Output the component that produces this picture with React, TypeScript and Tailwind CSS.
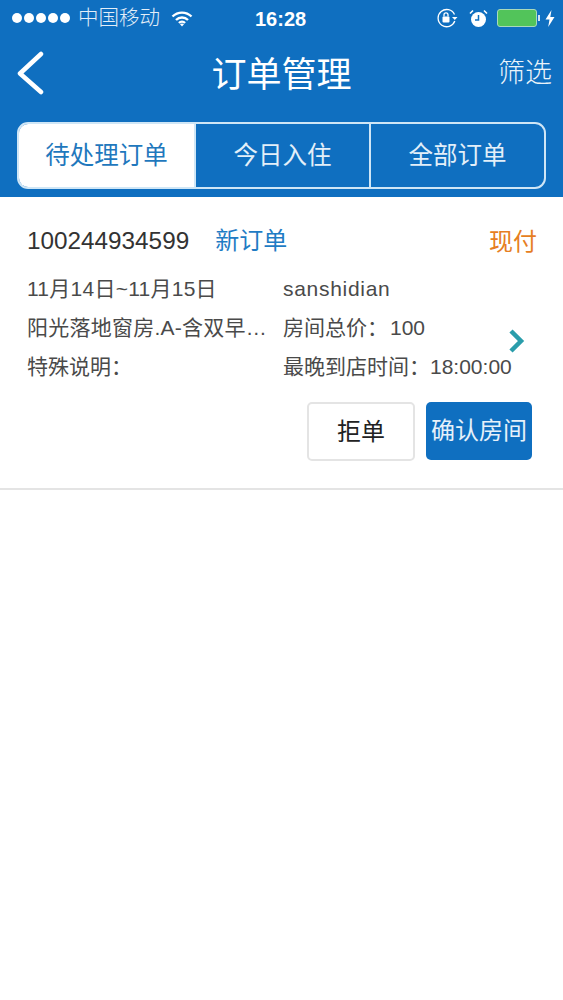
const font = "[font-family:'Liberation_Sans','Noto_Sans_CJK_SC',sans-serif]";

function StatusBar() {
  return (
    <div className="relative flex h-[36px] items-center justify-between pl-[12px] pr-[8px] text-white">
      <div className="flex items-center">
        <div className="flex gap-[2px]">
          {[0, 1, 2, 3, 4].map((i) => (
            <span key={i} className="h-[10px] w-[10px] rounded-full bg-white" />
          ))}
        </div>
        <span className="ml-[8px] text-[20.5px] leading-none font-light text-[#e3eef8]">中国移动</span>
        <svg className="ml-[11px]" width="22" height="17" viewBox="0 0 22 17" fill="none" stroke="white" strokeWidth="2.4">
          <path d="M1.5 6.5a13.5 13.5 0 0 1 19 0" />
          <path d="M5 10a8.5 8.5 0 0 1 12 0" />
          <path d="M8 13a4 4 0 0 1 6 0" />
          <path d="M11 16.5l-2-2.2a3 3 0 0 1 4 0z" fill="white" stroke="none" />
        </svg>
      </div>
      <span className="absolute left-[255px] top-[7px] text-[20px] leading-[24px] font-bold">16:28</span>
      <div className="flex items-center">
        <svg width="21" height="20" viewBox="0 0 21 20" fill="none" stroke="white" strokeWidth="1.3">
          <path d="M17.5 6.5A8.6 8.6 0 1 0 17.8 13" />
          <path d="M15 9l2.8 3 2.7-3" fill="white" stroke="none" />
          <rect x="5.5" y="8.5" width="7" height="6" rx="1" fill="white" stroke="none" />
          <path d="M7 8.5V6.8a2 2 0 0 1 4 0v1.7" />
        </svg>
        <svg className="ml-[11px]" width="19" height="19" viewBox="0 0 19 19" fill="none">
          <circle cx="9.5" cy="10.5" r="7.5" fill="white" />
          <path d="M9.5 6v5H6" stroke="#0f6fc0" strokeWidth="1.5" />
          <path d="M1 4.5L4 1.5M18 4.5L15 1.5" stroke="white" strokeWidth="1.6" />
        </svg>
        <div className="ml-[9px] flex items-center">
          <div className="h-[18px] w-[40px] rounded-[3px] border border-[#a9d9bb] bg-[#52c45a]" />
          <div className="ml-px h-[6px] w-[2px] bg-[#cfe3f3]" />
        </div>
        <svg className="ml-[5px]" width="10" height="17" viewBox="0 0 10 17">
          <path d="M6.5 0L0.5 9.5H4.5L3.2 17L9.5 7H5.3z" fill="white" />
        </svg>
      </div>
    </div>
  );
}

function NavBar() {
  return (
    <div className="grid h-[74px] grid-cols-[1fr_auto_1fr] items-center pl-[16px] pr-[11px] text-white">
      <svg width="28" height="44" viewBox="0 0 28 44" fill="none" stroke="white" strokeWidth="4.5" strokeLinecap="round" strokeLinejoin="round">
        <path d="M25 3L4 22.5 25 41" />
      </svg>
      <h1 className="pr-[5px] pt-[2px] text-[35px] leading-none font-normal">订单管理</h1>
      <span className="justify-self-end text-[27px] leading-none font-light text-[#eaf3fa]">筛选</span>
    </div>
  );
}

function Tabs() {
  return (
    <div className="mx-[17px] mt-[12px] flex h-[67px] overflow-hidden rounded-[11px] border-2 border-[#cfe6f6] text-[24.5px] text-[#e3eff9]">
      <div className="flex w-[175px] items-center justify-center bg-white pt-[2px] text-[#1f78bd]">待处理订单</div>
      <div className="flex w-[175px] items-center justify-center border-l-2 border-[#cfe6f6] pt-[2px]">今日入住</div>
      <div className="flex flex-1 items-center justify-center border-l-2 border-[#cfe6f6] pt-[2px]">全部订单</div>
    </div>
  );
}

function OrderCard() {
  return (
    <div className="border-b-2 border-[#e4e4e4] bg-white pl-[27px] pr-[27px]">
      <div className="box-content flex h-[37px] items-center justify-between pt-[26px]">
        <div className="flex items-center">
          <span className="text-[24.3px] leading-none text-[#333333]">100244934599</span>
          <span className="ml-[26px] text-[24px] leading-none text-[#1f7cc4]">新订单</span>
        </div>
        <span className="mr-[-1px] text-[24px] leading-none text-[#e67e22]">现付</span>
      </div>
      <div className="mt-[9px] flex text-[21px] leading-[39px] text-[#4a4a4a]">
        <div className="w-[256px] shrink-0">
          <div className="tracking-[0.25px]">11月14日~11月15日</div>
          <div className="tracking-[0.25px] whitespace-nowrap">阳光落地窗房.A-含双早…</div>
          <div>特殊说明：</div>
        </div>
        <div className="w-[225px] shrink-0 whitespace-nowrap">
          <div className="tracking-[0.7px]">sanshidian</div>
          <div>
            房间总价：<span className="ml-[2px]">100</span>
          </div>
          <div>最晚到店时间：18:00:00</div>
        </div>
        <svg className="mt-[60px] shrink-0" width="17" height="24" viewBox="0 0 17 24" fill="none" stroke="#2a9dab" strokeWidth="4.5">
          <path d="M3 2l10 10L3 22" />
        </svg>
      </div>
      <div className="mt-[16px] flex justify-end gap-[11px] pb-[27px] pr-[4px]">
        <button className="h-[59px] w-[108px] rounded-[5px] border-2 border-[#e4e4e4] bg-white text-[24px] text-[#222222]">拒单</button>
        <button className="h-[58px] w-[106px] rounded-[5px] bg-[#0f6fc0] text-[24px] whitespace-nowrap text-[#e6f1fa]">确认房间</button>
      </div>
    </div>
  );
}

export default function App() {
  return (
    <div className={`h-[1000px] w-[563px] overflow-hidden bg-white ${font}`}>
      <div className="h-[197px] bg-[#0f6fc0]">
        <StatusBar />
        <NavBar />
        <Tabs />
      </div>
      <OrderCard />
    </div>
  );
}
